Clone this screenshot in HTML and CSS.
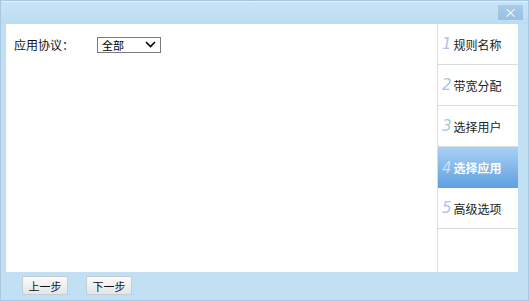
FILE: index.html
```html
<!DOCTYPE html>
<html lang="zh-CN">
<head>
    <meta charset="UTF-8">
    <title>选择应用</title>
    <link rel="stylesheet" href="styles.css">
</head>
<body>
    <div class="dialog">
        <!-- Title bar -->
        <div class="titlebar">
            <span class="close">×</span>
        </div>

        <!-- Main area -->
        <div class="main">
            <div class="form">
                <div class="row">
                    <label class="label">应用协议：</label>
                    <div class="select">
                        <span>全部</span>
                        <svg width="11" height="7" viewBox="0 0 11 7"><path d="M1 1 L5.5 5.5 L10 1" fill="none" stroke="#000" stroke-width="1.6"/></svg>
                    </div>
                </div>
            </div>
            <ul class="steps">
                <li><i>1</i>规则名称</li>
                <li><i>2</i>带宽分配</li>
                <li><i>3</i>选择用户</li>
                <li class="active"><i>4</i>选择应用</li>
                <li><i>5</i>高级选项</li>
                <li class="rest"></li>
            </ul>
        </div>

        <!-- Footer buttons -->
        <div class="footer">
            <button>上一步</button>
            <button>下一步</button>
        </div>
    </div>
</body>
</html>
```

FILE: styles.css
```css
/* Page */
body {
    margin: 0;
    font-family: "Noto Sans CJK SC", "DejaVu Sans", sans-serif;
    font-size: 12px;
    color: #222;
}

/* Dialog frame */
.dialog {
    width: 529px;
    height: 301px;
    box-sizing: border-box;
    border: 1px solid #a8c8e2;
    background-color: #c2e0f4;
    display: flex;
    flex-direction: column;
}

/* Title bar */
.titlebar {
    height: 23px;
    display: flex;
    justify-content: flex-end;
    align-items: flex-start;
    padding: 3px 5px 0 0;
    box-sizing: border-box;
    border-top: 1px solid #e4f1fb;
    background: linear-gradient(#c8e3f6, #bcdcf3);
}

.close {
    width: 25px;
    height: 15px;
    line-height: 14px;
    text-align: center;
    color: #fff;
    font-size: 13px;
    background: linear-gradient(#a9cce8, #98bfdf);
}

/* Main white area */
.main {
    height: 248px;
    margin: 0 10px 0 5px;
    display: flex;
    background-color: #fff;
}

.form {
    flex: 1;
    padding: 12px 0 0 8px;
    border-right: 1px solid #d8dde2;
}

.row {
    display: flex;
    align-items: center;
}

.label {
    width: 83px;
    font-size: 12px;
    color: #111;
}

.select {
    width: 64px;
    height: 16px;
    box-sizing: border-box;
    border: 1px solid #7a7a7a;
    display: flex;
    align-items: center;
    justify-content: space-between;
    padding: 0 4px 0 4px;
    font-size: 11px;
    color: #000;
}

/* Steps on the right */
.steps {
    width: 80px;
    margin: 0;
    padding: 0;
    list-style: none;
    display: flex;
    flex-direction: column;
}

.steps li {
    height: 41px;
    flex-shrink: 0;
    box-sizing: border-box;
    border-bottom: 1px solid #d8dde2;
    display: flex;
    align-items: center;
    padding-left: 4px;
    font-size: 12px;
    color: #222;
}

.steps i {
    font-family: "DejaVu Sans", sans-serif;
    font-size: 15px;
    color: #a6c8ea;
    margin-right: 2px;
}

.steps li.active {
    background: linear-gradient(#a9d1f4, #5f9fe0);
    color: #fff;
    font-weight: bold;
    border-bottom: none;
}

.steps li.active i {
    color: #c9e0f6;
    font-weight: normal;
}

.steps li.rest {
    flex: 1;
    border-bottom: none;
}

/* Footer */
.footer {
    flex: 1;
    display: flex;
    align-items: center;
    gap: 18px;
    padding: 0 0 1px 21px;
}

button {
    width: 46px;
    height: 19px;
    padding: 0;
    border: 1px solid #c4ccd4;
    background: linear-gradient(#fafafa, #e2e6ea);
    font-family: "Noto Sans CJK SC", sans-serif;
    font-size: 11px;
    color: #111;
}
```
